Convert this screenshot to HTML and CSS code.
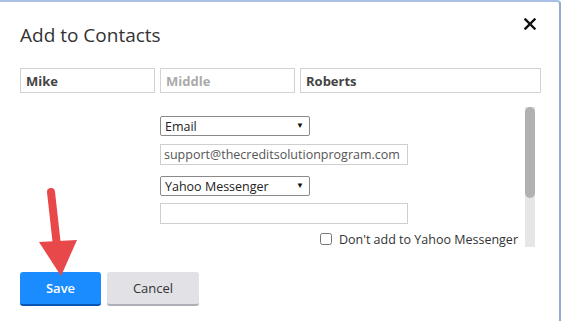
FILE: index.html
```html
<!DOCTYPE html>
<html lang="en">
  <head>
    <meta charset="UTF-8" />
    <meta name="viewport" content="width=device-width, initial-scale=1" />
    <title>Add to Contacts</title>
    <link rel="stylesheet" href="styles.css">
  </head>
  <body>
    <div class="dialog">
      <header class="dialog-head">
        <h1>Add to Contacts</h1>
        <button class="close" aria-label="Close">
          <svg width="12" height="12" viewBox="0 0 12 12">
            <path d="M1.5 1.5 L10.5 10.5 M10.5 1.5 L1.5 10.5" stroke="#111" stroke-width="2.4" stroke-linecap="square" />
          </svg>
        </button>
      </header>

      <div class="name-row">
        <input type="text" value="Mike" />
        <input type="text" placeholder="Middle" />
        <input type="text" value="Roberts" />
      </div>

      <div class="scroll-wrap">
        <div class="scroll-content">
          <div class="fields">
            <span class="select-wrap">
              <select>
                <option>Email</option>
                <option>Phone</option>
              </select>
            </span>
            <input type="text" class="field" value="support@thecreditsolutionprogram.com" />
            <span class="select-wrap gap-top">
              <select>
                <option>Yahoo Messenger</option>
                <option>Skype</option>
              </select>
            </span>
            <input type="text" class="field tight" />
          </div>
          <label class="check-row">
            <input type="checkbox" />
            <span>Don't add to Yahoo Messenger</span>
          </label>
          <div class="fields">
            <span class="select-wrap">
              <select>
                <option>Phone</option>
              </select>
            </span>
            <input type="text" class="field" />
          </div>
        </div>
        <div class="scrollbar"><div class="thumb"></div></div>
      </div>

      <footer class="dialog-foot">
        <button class="btn save">Save</button>
        <button class="btn cancel">Cancel</button>
      </footer>

      <!-- red annotation arrow -->
      <svg class="arrow" width="50" height="96" viewBox="0 0 50 96">
        <path d="M16 8 L22 62" stroke="#e8484a" stroke-width="8" stroke-linecap="round" fill="none" />
        <polygon points="4,58 42,56 26,92" fill="#e8484a" />
      </svg>
    </div>
  </body>
</html>
```

FILE: styles.css
```css
body {
  margin: 0;
  font-family: "Open Sans", Arial, sans-serif;
  color: #333;
  background: #fff;
}

.dialog {
  position: relative;
  box-sizing: border-box;
  width: 561px;
  height: 321px;
  border-top: 2px solid #a9bfe3;
  border-right: 2px solid #93a9d2;
  border-top-right-radius: 4px;
  background: #fff;
  padding: 0 20px;
  overflow: hidden;
}

.dialog-head {
  display: flex;
  justify-content: space-between;
  align-items: flex-start;
  padding-top: 21px;
  height: 45px;
}

.dialog-head h1 {
  margin: 0;
  font-size: 19px;
  font-weight: normal;
  line-height: 24px;
  color: #333;
}

.close {
  display: block;
  border: none;
  background: none;
  padding: 0;
  margin: -5px 3px 0 0;
  cursor: pointer;
}

.close svg {
  display: block;
}

.name-row {
  display: grid;
  grid-template-columns: 135px 135px 241px;
  gap: 5px;
}

.name-row input {
  box-sizing: border-box;
  height: 25px;
  border: 1px solid #d2d2d2;
  padding: 0 5px;
  font-family: inherit;
  font-size: 13px;
  font-weight: bold;
  color: #444;
}

.name-row input::placeholder {
  color: #aaa;
}

.scroll-wrap {
  display: flex;
  margin-top: 14px;
  height: 140px;
  width: 515px;
}

.scroll-content {
  flex: 1;
  overflow: hidden;
}

.scrollbar {
  width: 10px;
  background: #e6e6e6;
}

.thumb {
  height: 91px;
  background: #b1b1b1;
  border-radius: 5px;
}

.fields {
  display: flex;
  flex-direction: column;
  align-items: flex-start;
  gap: 8px;
  padding: 9px 0 0 140px;
}

.select-wrap {
  position: relative;
  display: flex;
}

.select-wrap::after {
  content: "\25BC";
  position: absolute;
  right: 6px;
  top: 3px;
  font-size: 8px;
  color: #111;
  pointer-events: none;
}

.select-wrap select {
  appearance: none;
  box-sizing: border-box;
  width: 150px;
  height: 20px;
  border: 1px solid #8a8a8a;
  border-radius: 2px;
  padding: 0 4px;
  background: #fff;
  font-family: inherit;
  font-size: 12.5px;
  color: #222;
}

.field {
  box-sizing: border-box;
  width: 248px;
  height: 21px;
  border: 1px solid #cfcfcf;
  padding: 0 3px;
  font-family: inherit;
  font-size: 12.5px;
  color: #555;
}

.gap-top {
  margin-top: 3px;
}

.tight {
  margin-top: -1px;
}

.check-row {
  display: flex;
  justify-content: flex-end;
  align-items: center;
  gap: 7px;
  height: 16px;
  padding: 7px 7px 0 0;
  font-size: 12.5px;
  color: #333;
}

.check-row input {
  margin: 0;
  width: 12px;
  height: 12px;
}

.dialog-foot {
  display: flex;
  gap: 6px;
  margin-top: 25px;
}

.btn {
  box-sizing: border-box;
  height: 34px;
  border: none;
  border-radius: 3px;
  font-family: inherit;
  font-size: 13px;
  cursor: pointer;
}

.save {
  width: 81px;
  background: #1a8cff;
  border-bottom: 2px solid #0b55b0;
  color: #fff;
  font-weight: 600;
}

.cancel {
  width: 92px;
  background: #e1e1e6;
  border-bottom: 2px solid #aeaeb6;
  color: #333;
}

.arrow {
  position: absolute;
  left: 35px;
  top: 182px;
}
```
